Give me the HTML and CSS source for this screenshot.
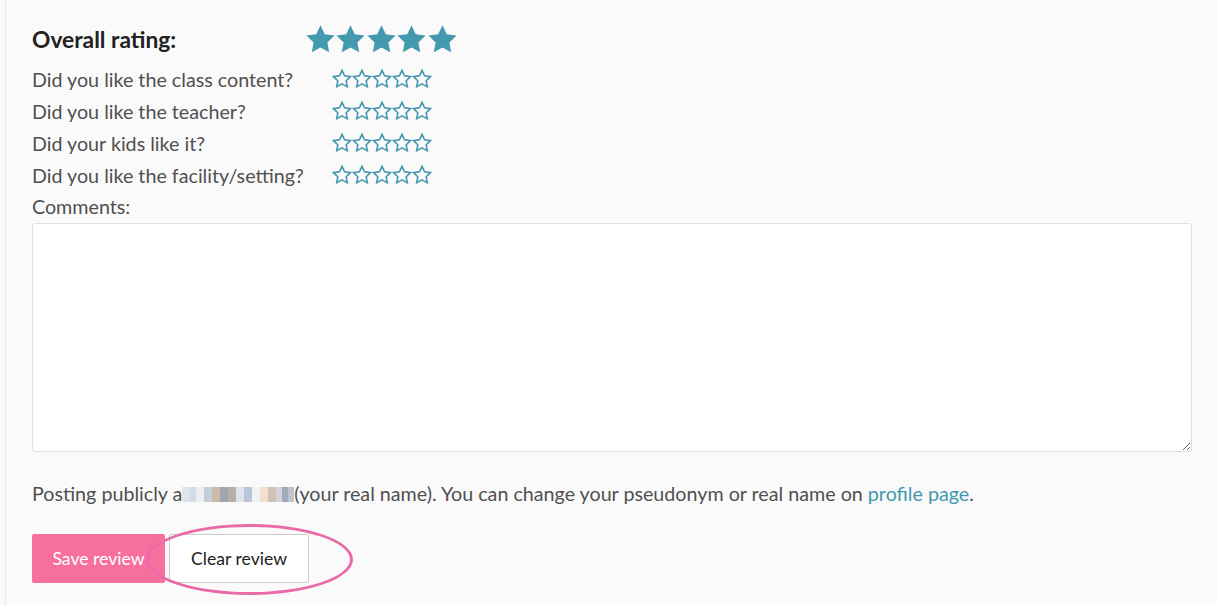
FILE: index.html
```html
<!DOCTYPE html>
<html>
<head>
<meta charset="utf-8">
<link rel="stylesheet" href="styles.css">
</head>
<body>
<svg width="0" height="0" class="defs">
  <defs>
    <path id="star" d="M12 1.6l3.1 6.5 7.1 1-5.15 5 1.25 7.1L12 17.8l-6.3 3.4 1.25-7.1-5.15-5 7.1-1z"/>
  </defs>
</svg>
<div class="page">
  <div class="panel">
    <div class="overall">
      <div class="overall-label">Overall rating:</div>
      <div class="stars big">
        <svg viewBox="0 0 24 24"><use href="#star"/></svg>
        <svg viewBox="0 0 24 24"><use href="#star"/></svg>
        <svg viewBox="0 0 24 24"><use href="#star"/></svg>
        <svg viewBox="0 0 24 24"><use href="#star"/></svg>
        <svg viewBox="0 0 24 24"><use href="#star"/></svg>
      </div>
    </div>
    <div class="question">
      <div class="q-label">Did you like the class content?</div>
      <div class="stars small">
        <svg viewBox="0 0 24 24"><use href="#star"/></svg>
        <svg viewBox="0 0 24 24"><use href="#star"/></svg>
        <svg viewBox="0 0 24 24"><use href="#star"/></svg>
        <svg viewBox="0 0 24 24"><use href="#star"/></svg>
        <svg viewBox="0 0 24 24"><use href="#star"/></svg>
      </div>
    </div>
    <div class="question">
      <div class="q-label">Did you like the teacher?</div>
      <div class="stars small">
        <svg viewBox="0 0 24 24"><use href="#star"/></svg>
        <svg viewBox="0 0 24 24"><use href="#star"/></svg>
        <svg viewBox="0 0 24 24"><use href="#star"/></svg>
        <svg viewBox="0 0 24 24"><use href="#star"/></svg>
        <svg viewBox="0 0 24 24"><use href="#star"/></svg>
      </div>
    </div>
    <div class="question">
      <div class="q-label">Did your kids like it?</div>
      <div class="stars small">
        <svg viewBox="0 0 24 24"><use href="#star"/></svg>
        <svg viewBox="0 0 24 24"><use href="#star"/></svg>
        <svg viewBox="0 0 24 24"><use href="#star"/></svg>
        <svg viewBox="0 0 24 24"><use href="#star"/></svg>
        <svg viewBox="0 0 24 24"><use href="#star"/></svg>
      </div>
    </div>
    <div class="question">
      <div class="q-label">Did you like the facility/setting?</div>
      <div class="stars small">
        <svg viewBox="0 0 24 24"><use href="#star"/></svg>
        <svg viewBox="0 0 24 24"><use href="#star"/></svg>
        <svg viewBox="0 0 24 24"><use href="#star"/></svg>
        <svg viewBox="0 0 24 24"><use href="#star"/></svg>
        <svg viewBox="0 0 24 24"><use href="#star"/></svg>
      </div>
    </div>
    <div class="comments-label">Comments:</div>
    <textarea class="comments"></textarea>
    <p class="posting">Posting publicly a<span class="blurred"></span>(your real name). You can change your pseudonym or real name on <a href="#" class="link">profile page</a>.</p>
    <div class="actions">
      <button class="btn btn-save">Save review</button>
      <button class="btn btn-clear">Clear review</button>
      <span class="highlight"></span>
    </div>
  </div>
</div>
</body>
</html>
```

FILE: styles.css
```css
html, body {
  margin: 0;
  padding: 0;
  background: #fafafa;
}

body {
  font-family: Lato, "Open Sans", sans-serif;
  color: #505050;
  height: 605px;
  overflow: hidden;
}

.defs {
  position: absolute;
  width: 0;
  height: 0;
}

.page {
  padding-left: 5px;
  height: 605px;
}

.panel {
  border-left: 1px solid #e6e6e6;
  padding: 21px 0 0 26px;
  height: 100%;
  box-sizing: border-box;
  width: 1186px;
}

.overall {
  display: flex;
  align-items: center;
  height: 36px;
  margin-bottom: 6px;
}

.overall-label {
  width: 272px;
  font-weight: 700;
  font-size: 22.8px;
  color: #222;
}

.stars {
  display: flex;
  fill: #4599af;
}

.stars.big svg {
  width: 33px;
  height: 33px;
  margin-right: -2.6px;
}

.stars.small {
  fill: none;
  stroke: #4599af;
  stroke-width: 2px;
  stroke-linejoin: miter;
}

.stars.small svg {
  width: 20px;
  height: 20px;
  overflow: visible;
}

.question {
  display: flex;
  align-items: center;
  height: 32px;
  font-size: 19.7px;
}

.q-label {
  width: 300px;
}

.comments-label {
  font-size: 19.7px;
  line-height: 32px;
}

.comments {
  display: block;
  width: 1160px;
  height: 229px;
  box-sizing: border-box;
  border: 1px solid #e0e0e0;
  border-radius: 3px;
  background: #fff;
  margin: 0;
  resize: vertical;
  font-family: inherit;
}

.posting {
  margin: 26px 0 0;
  font-size: 19.7px;
  line-height: 32px;
}

.blurred {
  display: inline-block;
  width: 112px;
  height: 15px;
  vertical-align: -1px;
  background:
    linear-gradient(90deg,
      #d9dee6 0 8px, #c9d3e0 8px 14px, #e9ecf0 14px 22px,
      #b7c4d4 22px 30px, #c2a996 30px 38px, #8d8f9b 38px 46px,
      #a89b95 46px 54px, #d6dfea 54px 62px, #aab9cc 62px 70px,
      #eef0f2 70px 78px, #efd9bf 78px 86px, #c8b4a4 86px 94px,
      #c6cad3 94px 100px, #8896aa 100px 106px, #aeb5c3 106px 112px);
  opacity: 0.8;
}

.link {
  color: #3f98b0;
  text-decoration: none;
}

.actions {
  position: relative;
  display: flex;
  gap: 4px;
  margin-top: 24px;
}

.btn {
  font-family: Lato, "Open Sans", sans-serif;
  font-size: 17.6px;
  height: 49px;
  border-radius: 2px;
  cursor: pointer;
}

.btn-save {
  width: 133px;
  background: #f7709d;
  color: #fff;
  border: none;
}

.btn-clear {
  width: 140px;
  background: #fff;
  color: #222;
  border: 1px solid #ccc;
}

.highlight {
  position: absolute;
  left: 114px;
  top: -10px;
  width: 201px;
  height: 65px;
  border: 3px solid #ea6aa9;
  border-radius: 50%;
  pointer-events: none;
}
```
